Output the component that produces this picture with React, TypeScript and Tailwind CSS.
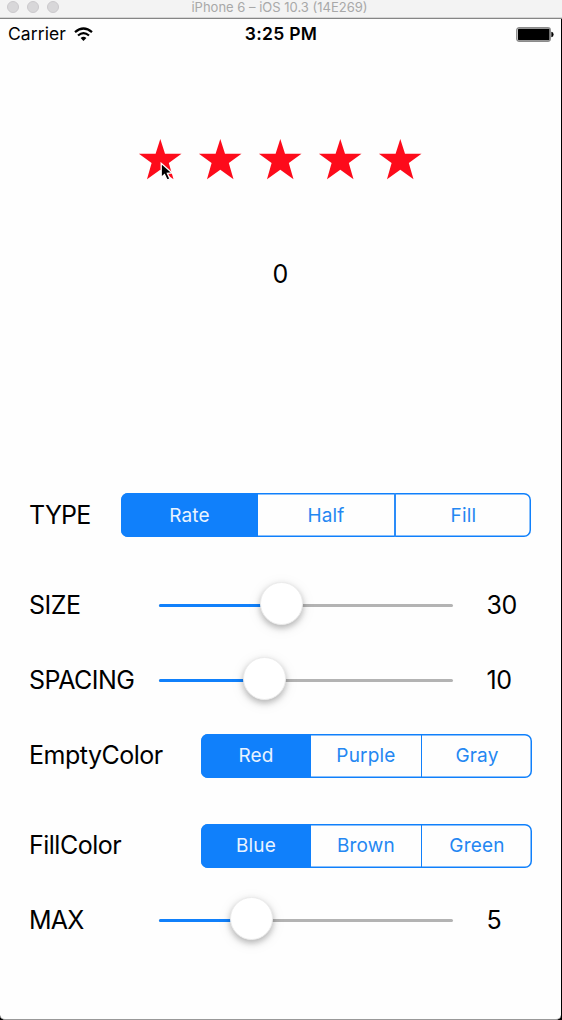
type SegmentedProps = { options: string[]; className: string; divider: string };

function Segmented({ options, className, divider }: SegmentedProps) {
  return (
    <div className={`grid overflow-hidden rounded-[7px] shadow-[inset_0_0_0_1.5px_#1080fb] ${className}`}>
      {options.map((label, i) => (
        <button
          key={label}
          className={`text-[19px] leading-none tracking-[0.01em] ${
            i === 0 ? "bg-[#1080fb] text-[#e9f3ff]" : "text-[#2487f2]"
          } ${i === 2 ? divider : ""}`}
        >
          {label}
        </button>
      ))}
    </div>
  );
}

function Slider({ filled }: { filled: number }) {
  return (
    <div className="relative flex h-[3px] w-[294px] rounded-full bg-[#b3b3b3]">
      <div className="h-full rounded-full bg-[#1080fb]" style={{ width: filled }} />
      <div
        className="absolute -top-[22px] size-[43px] rounded-full border border-[#ececec] bg-white shadow-[0_3px_6px_rgba(0,0,0,0.26),0_3px_16px_rgba(0,0,0,0.07)]"
        style={{ left: filled - 21.5 }}
      />
    </div>
  );
}

type SliderRowProps = { label: string; tracking: string; filled: number; value: number };

function SliderRow({ label, tracking, filled, value }: SliderRowProps) {
  return (
    <div className="flex h-[45px] items-center">
      <span className={`w-[130.4px] shrink-0 ${tracking}`}>{label}</span>
      <Slider filled={filled} />
      <span className="ml-[33px] tracking-[-0.015em]">{value}</span>
    </div>
  );
}

function Star() {
  return (
    <svg width="44" height="44" viewBox="0 0 44 44" fill="#fd0b1b">
      <path d="M22.3 1 27 15.7H43.5L30.8 25.1 35.5 41.3 22.3 31.8 9 41.3 13.6 25.1.9 15.7H17.6Z" />
    </svg>
  );
}

function Cursor() {
  return (
    <svg className="absolute left-[22px] top-[24px]" width="16" height="21" viewBox="0 0 16 21">
      <path
        d="M1.2 1.3V15.5L4.5 12.5 7.2 18.2 10 16.9 7.4 11.4 12.2 11Z"
        fill="#000"
        stroke="#fff"
        strokeWidth="1.3"
      />
    </svg>
  );
}

export default function App() {
  return (
    <div className="flex h-[1020px] w-[562px] flex-col overflow-hidden bg-black font-['Inter','Liberation_Sans',sans-serif] text-black">
      <header className="grid h-[19px] shrink-0 grid-cols-[1fr_auto_1fr] items-center border-b border-[#858585] bg-[#f3f3f3] pl-[7px] pr-[10px] shadow-[inset_0_-1px_0_#d5d5d5]">
        <div className="-mt-1 flex gap-2">
          {[0, 1, 2].map((n) => (
            <span key={n} className="size-3 rounded-full border border-[#cbc9cc] bg-[#d8d7d9]" />
          ))}
        </div>
        <h1 className="-mt-[3px] text-[13px] leading-none text-[#a8a8a8]">
          iPhone 6 – iOS 10.3 (14E269)
        </h1>
      </header>

      <main className="mr-px flex flex-1 flex-col rounded-b-[5px] border-b border-[#999] bg-[#fefefe]">
        <div className="grid h-[31px] grid-cols-[1fr_auto_1fr] items-center pl-2 pr-[7px]">
          <div className="-mt-px flex items-center gap-[8px]">
            <span className="text-[17.5px] leading-none tracking-[0.005em]">Carrier</span>
            <svg width="19" height="15" viewBox="0 0 19 15" fill="none" stroke="#000" strokeWidth="2.2">
              <path d="M1 5.2Q9.5-2.2 18 5.2" />
              <path d="M4 8.5Q9.5 3.8 15 8.5" />
              <path d="M6.6 11Q9.5 8.6 12.4 11L9.5 14Z" fill="#000" stroke="none" />
            </svg>
          </div>
          <span className="-mt-[2px] text-[17.5px] font-semibold leading-none tracking-[0.015em]">3:25 PM</span>
          <svg className="-mt-px justify-self-end" width="38" height="15" viewBox="0 0 38 15">
            <rect x=".7" y=".7" width="33.6" height="13.6" rx="2.5" fill="#ddd" stroke="#8b8b8b" strokeWidth="1.3" />
            <rect x="2" y="1.7" width="31.4" height="11.6" rx="1" fill="#000" />
            <path d="M35.3 4.7Q37.6 5 37.6 7.5T35.3 10.3Z" fill="#000" />
          </svg>
        </div>

        <div className="mt-[88px] flex justify-center gap-4 pr-[1px]">
          <div className="relative h-11">
            <Star />
            <Cursor />
          </div>
          <Star />
          <Star />
          <Star />
          <Star />
        </div>

        <output className="mt-[80px] h-[25px] text-center text-[25px] leading-[25px]">0</output>

        <section className="mt-[206px] flex flex-col pl-[29px] text-[25px] leading-none">
          <div className="flex h-11 items-center">
            <span className="w-[92px] tracking-[-0.03em]">TYPE</span>
            <Segmented
              className="h-11 w-[410px] grid-cols-[137px_136px_137px]"
              options={["Rate", "Half", "Fill"]}
              divider="border-l-2 border-[#2c8cf8]"
            />
          </div>
          <div className="mt-[46px]">
            <SliderRow label="SIZE" tracking="tracking-[-0.02em]" filled={122.3} value={30} />
          </div>
          <div className="mt-[30px]">
            <SliderRow label="SPACING" tracking="tracking-[-0.02em]" filled={104.9} value={10} />
          </div>
          <div className="mt-[31px] flex h-[43.5px] items-center">
            <span className="w-[172px] tracking-[-0.02em]">EmptyColor</span>
            <Segmented
              className="h-full w-[331px] grid-cols-[110px_110px_111px]"
              options={["Red", "Purple", "Gray"]}
              divider="border-l border-[#1080fb]"
            />
          </div>
          <div className="mt-[46.5px] flex h-[43.5px] items-center">
            <span className="w-[172px] tracking-[-0.02em]">FillColor</span>
            <Segmented
              className="h-full w-[331px] grid-cols-[110px_110px_111px]"
              options={["Blue", "Brown", "Green"]}
              divider="border-l border-[#1080fb]"
            />
          </div>
          <div className="mt-[30.5px]">
            <SliderRow label="MAX" tracking="tracking-[-0.03em]" filled={92.3} value={5} />
          </div>
        </section>
      </main>
    </div>
  );
}
